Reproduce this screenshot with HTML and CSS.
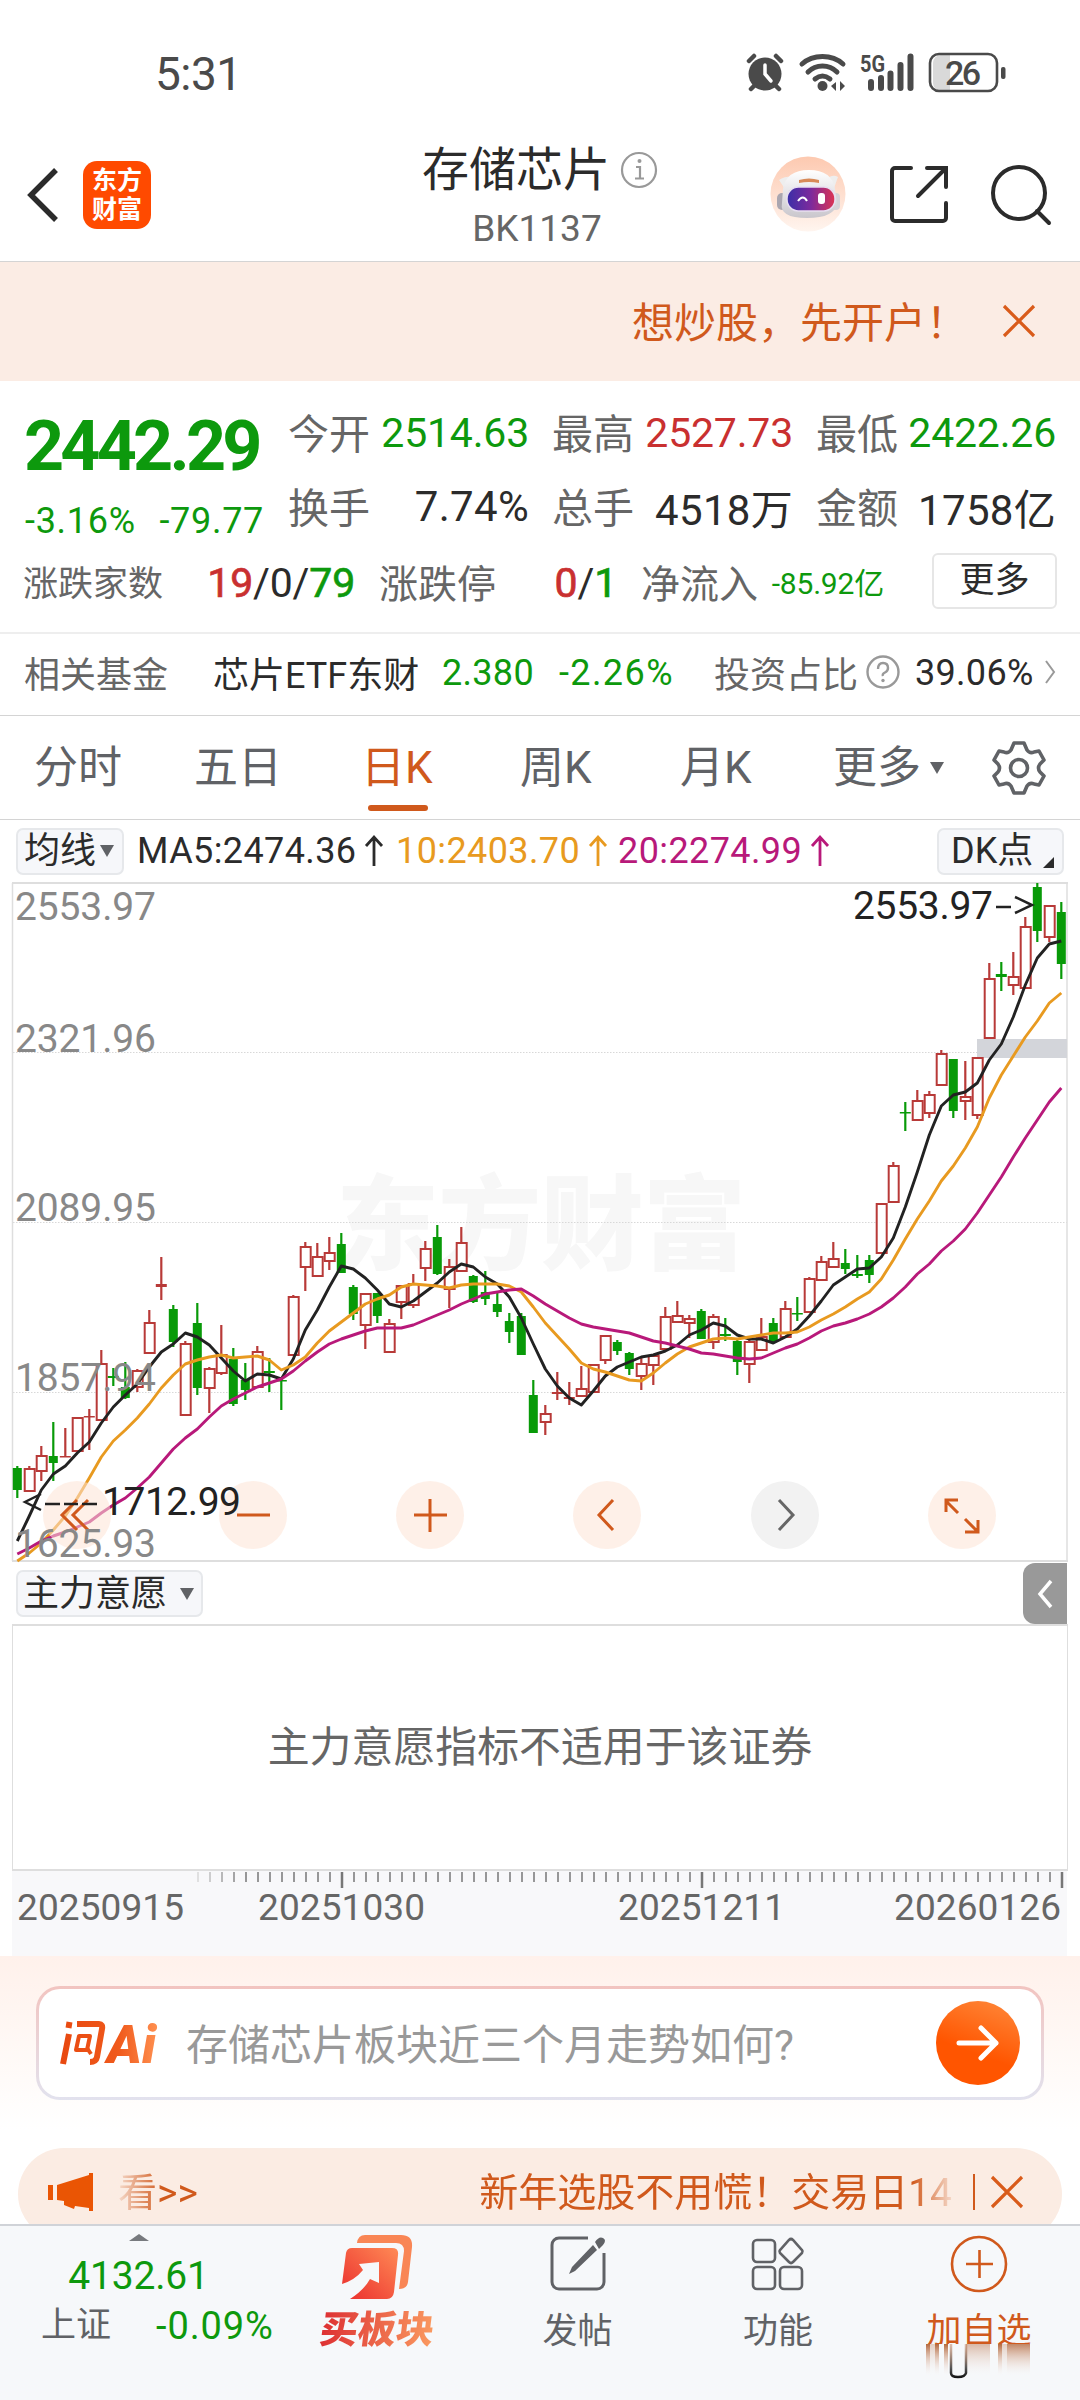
FILE: index.html
```html
<!DOCTYPE html>
<html lang="zh-CN">

<head>
    <meta charset="UTF-8">
    <meta name="viewport" content="width=device-width, initial-scale=1.0">
    <title>存储芯片 BK1137</title>
    <link rel="stylesheet" href="styles.css">
</head>

<body>
    <div class="status-bar">
        <span class="clock">5:31</span>
        <svg class="status-icons" width="264" height="44" viewBox="0 0 264 44">
            <!-- 闹钟 -->
            <g stroke="#4a4a4a" stroke-width="4.5" stroke-linecap="round" fill="none">
                <circle cx="20" cy="22" r="16.5" fill="#4a4a4a" stroke="none" />
                <path d="M4 9l5-5M36 9l-5-5M10 33l-4 4M30 33l4 4" />
                <path d="M20 13v9l6 7" stroke="#fff" stroke-width="3.5" />
            </g>
            <!-- WiFi -->
            <g stroke="#4a4a4a" stroke-width="5" stroke-linecap="round" fill="none">
                <path d="M57 12c11-10 30-10 41 0" />
                <path d="M63 20c8-8 21-8 29 0" />
                <path d="M70 27c5-4 10-4 15 0" />
            </g>
            <circle cx="77.5" cy="34" r="5" fill="#4a4a4a" />
            <path d="M86 34l5-4v9zM93 29v10M95 29l5 5-5 5z" fill="#4a4a4a" />
            <text x="115" y="20" class="net-label" textLength="25" lengthAdjust="spacingAndGlyphs">5G</text>
            <path d="M126 30v6M136 26v10M145.5 21.5v14.5M155.5 13v23M165.5 4.5v31.5" stroke="#4a4a4a"
                stroke-width="6" stroke-linecap="round" />
            <!-- 电池 -->
            <path d="M196 3h9v36h-9a8 8 0 0 1-8-8V11a8 8 0 0 1 8-8z" fill="#d9d9d9" />
            <rect x="185" y="2" width="67" height="37" rx="9" fill="none" stroke="#4a4a4a" stroke-width="2.6" />
            <rect x="256" y="15" width="4.5" height="12" rx="2" fill="#4a4a4a" />
            <text x="200" y="32.5" class="battery-label" textLength="36">26</text>
        </svg>
    </div>

    <header class="header">
        <div class="header-left">
            <svg width="34" height="56" viewBox="0 0 34 56">
                <path d="M31 3L6 28l25 25" fill="none" stroke="#2b2b2b" stroke-width="5.5" />
            </svg>
            <div class="logo"><span>东方</span><span>财富</span></div>
        </div>
        <div class="header-title">
            <h1>存储芯片<svg width="38" height="38" viewBox="0 0 38 38">
                    <circle cx="19" cy="19" r="17" fill="none" stroke="#999" stroke-width="2.2" />
                    <path d="M16 16h4v11M15 27.5h9" fill="none" stroke="#999" stroke-width="2.2" />
                    <circle cx="19.5" cy="10" r="2" fill="#999" />
                </svg></h1>
            <p>BK1137</p>
        </div>
        <div class="header-right">
            <svg width="76" height="76" viewBox="0 0 76 76">
                <defs>
                    <linearGradient id="halo" x1="0" y1="0" x2="0" y2="1">
                        <stop offset="0" stop-color="#fdc9b0" />
                        <stop offset="1" stop-color="#fff5ef" />
                    </linearGradient>
                    <linearGradient id="helmet" x1="0" y1="0" x2="0" y2="1">
                        <stop offset="0" stop-color="#fff" />
                        <stop offset="1" stop-color="#c9c6cc" />
                    </linearGradient>
                    <linearGradient id="visor" x1="0" y1="0" x2="1" y2="0">
                        <stop offset="0" stop-color="#3a2fa8" />
                        <stop offset="0.5" stop-color="#7d2a9c" />
                        <stop offset="1" stop-color="#dd3352" />
                    </linearGradient>
                </defs>
                <circle cx="38" cy="37" r="37.5" fill="url(#halo)" />
                <path d="M9 23q7-4 11-3l-5 12zM68 20q-5-3-10 1l6 10z" fill="#eee" />
                <rect x="7" y="36" width="10" height="17" rx="5" fill="#aaa6b0" />
                <rect x="61" y="36" width="9" height="17" rx="4" fill="#d5d2d8" />
                <path d="M13 32q3-19 26-19t26 19l2 14q-2 15-30 15T12 46z" fill="url(#helmet)" />
                <path d="M29 23q10-3 20 0v3q-10-2-20 0z" fill="#d88a58" />
                <rect x="17" y="30" width="48" height="24" rx="11.5" fill="url(#visor)" stroke="#e7def1" stroke-width="1.5" />
                <path d="M28 44q5-7 9 0" fill="none" stroke="#fff" stroke-width="2" />
                <rect x="48" y="36" width="7" height="11" rx="3" fill="#fff" />
            </svg>
            <svg width="60" height="60" viewBox="0 0 60 60">
                <g fill="none" stroke="#2b2b2b" stroke-width="4" stroke-linecap="round">
                    <path d="M22 3H6a3 3 0 0 0-3 3v47a3 3 0 0 0 3 3h48a3 3 0 0 0 3-3V38" />
                    <path d="M38 3h19v19M56 4L29 31" />
                </g>
            </svg>
            <svg width="60" height="60" viewBox="0 0 60 60">
                <g fill="none" stroke="#2b2b2b" stroke-width="4" stroke-linecap="round">
                    <circle cx="28" cy="28" r="26" />
                    <path d="M46 46l12 12" />
                </g>
            </svg>
        </div>
    </header>

    <div class="promo">
        <span>想炒股，先开户！</span>
        <svg width="34" height="34" viewBox="0 0 34 34">
            <path d="M2 2l30 30M32 2L2 32" stroke="#d95b1a" stroke-width="3.2" />
        </svg>
    </div>

    <section class="quote">
        <div class="quote-grid">
            <div class="price down">2442.29</div>
            <div class="cell"><label>今开</label><b class="down">2514.63</b></div>
            <div class="cell"><label>最高</label><b class="up">2527.73</b></div>
            <div class="cell"><label>最低</label><b class="down">2422.26</b></div>
            <div class="change down"><span>-3.16%</span><span>-79.77</span></div>
            <div class="cell wide"><label>换手</label><b>7.74%</b></div>
            <div class="cell wide"><label>总手</label><b>4518万</b></div>
            <div class="cell wide"><label>金额</label><b>1758亿</b></div>
        </div>
        <div class="breadth">
            <div class="cell"><label class="small">涨跌家数</label><b><i class="up">19</i>/0/<i class="down">79</i></b></div>
            <div class="cell"><label>涨跌停</label><b><i class="up">0</i>/<i class="down">1</i></b></div>
            <div class="cell inflow"><label>净流入</label><b class="down">-85.92亿</b></div>
            <button class="more">更多</button>
        </div>
    </section>

    <div class="fund">
        <span class="muted">相关基金</span>
        <span>芯片ETF东财</span>
        <span class="down num">2.380</span>
        <span class="down num signed">-2.26%</span>
        <span class="muted">投资占比</span>
        <svg width="34" height="34" viewBox="0 0 34 34">
            <circle cx="17" cy="17" r="15.5" fill="none" stroke="#999" stroke-width="2.4" />
            <path d="M12 14q0-6 5-6t5 5q0 3-3 4.5T17 21" fill="none" stroke="#999" stroke-width="2.4" />
            <circle cx="17" cy="25.5" r="1.7" fill="#999" />
        </svg>
        <span class="num">39.06%</span>
        <svg width="12" height="24" viewBox="0 0 12 24">
            <path d="M2 1l8 11-8 11" fill="none" stroke="#999" stroke-width="2" />
        </svg>
    </div>

    <nav class="tabs">
        <span>分时</span>
        <span>五日</span>
        <span class="active">日K</span>
        <span>周K</span>
        <span>月K</span>
        <span class="tab-more">更多<i class="caret"></i></span>
        <svg width="52" height="54" viewBox="-26 -27 52 54">
            <path d="M-5-25H5L8-18Q11-14 15-16L20-17 25-8 21-4Q18 0 21 4L25 8 20 17 15 16Q11 14 8 18L5 25H-5L-8 18Q-11 14-15 16L-20 17-25 8-21 4Q-18 0-21-4L-25-8-20-17-15-16Q-11-14-8-18z"
                fill="none" stroke="#606266" stroke-width="3.6" stroke-linejoin="round" />
            <circle r="8.5" fill="none" stroke="#606266" stroke-width="3.6" />
        </svg>
    </nav>

    <div class="ma-row">
        <span class="select">均线<i class="caret"></i></span>
        <span class="ma ma5">MA5:2474.36<svg width="20" height="32" viewBox="0 0 20 32"><path d="M10 31V2M2 11l8-9 8 9" /></svg></span>
        <span class="ma ma10">10:2403.70<svg width="20" height="32" viewBox="0 0 20 32"><path d="M10 31V2M2 11l8-9 8 9" /></svg></span>
        <span class="ma ma20">20:2274.99<svg width="20" height="32" viewBox="0 0 20 32"><path d="M10 31V2M2 11l8-9 8 9" /></svg></span>
        <span class="select dk">DK点</span>
    </div>

    <svg id="kline" width="1080" height="681" viewBox="0 882 1080 681"></svg>

    <div class="indicator-bar">
        <span class="select">主力意愿<i class="caret"></i></span>
        <span class="drawer">
            <svg width="18" height="30" viewBox="0 0 18 30">
                <path d="M15 2L4 15l11 13" fill="none" stroke="#fff" stroke-width="3.5" />
            </svg>
        </span>
    </div>
    <div class="indicator-panel">主力意愿指标不适用于该证券</div>

    <div class="axis">
        <svg id="ticks" width="1055" height="17" viewBox="12 0 1055 17"></svg>
        <div class="dates">
            <span>20250915</span><span>20251030</span><span>20251211</span><span>20260126</span>
        </div>
    </div>

    <section class="ask">
        <div class="ask-box">
            <svg class="ask-logo" width="98" height="46" viewBox="0 0 98 46">
                <defs>
                    <linearGradient id="ask" gradientUnits="userSpaceOnUse" x1="0" y1="0" x2="98" y2="0">
                        <stop offset="0" stop-color="#e8480f" />
                        <stop offset="0.6" stop-color="#f05a1c" />
                        <stop offset="1" stop-color="#ff9050" />
                    </linearGradient>
                </defs>
                <g fill="none" stroke="url(#ask)" stroke-width="6" stroke-linejoin="round">
                    <path d="M9 14L3 44M9.5 2L8.5 8" />
                    <path d="M17 4h22q4 0 3 5l-5 28q-1 5-7 5" />
                    <path d="M19 16h11l-3 14H16z" stroke-width="4" />
                    <path d="M27 28l4 6" stroke-width="4" />
                </g>
                <text x="47" y="43" class="ask-latin" textLength="49" lengthAdjust="spacingAndGlyphs" fill="url(#ask)">Ai</text>
            </svg>
            <span>存储芯片板块近三个月走势如何?</span>
            <div class="send">
                <svg width="44" height="38" viewBox="0 0 44 38">
                    <path d="M3 19h37M25 4l15 15-15 15" fill="none" stroke="#fff" stroke-width="5" stroke-linecap="round"
                        stroke-linejoin="round" />
                </svg>
            </div>
        </div>
    </section>

    <div class="notice-wrap">
        <div class="notice">
            <svg width="46" height="40" viewBox="0 0 46 40">
                <path d="M0 13h5v15H0zM9 13l32-10V1h4v38h-4v-3l-14-2-1 3-10-4v-4l-7-1z" fill="#ea5504" />
            </svg>
            <div class="marquee"><span>看&gt;&gt;</span><span>新年选股不用慌！交易日14</span></div>
            <i class="divider"></i>
            <svg width="32" height="34" viewBox="0 0 32 34">
                <path d="M1 2l30 30M31 2L1 32" stroke="#d95b1a" stroke-width="3.2" />
            </svg>
        </div>
    </div>

    <footer class="bottom-nav">
        <div class="index">
            <i class="caret-up"></i>
            <div class="index-value down">4132.61</div>
            <div class="index-row"><span>上证</span><span class="down">-0.09%</span></div>
        </div>
        <div class="item buy">
            <svg width="72" height="65" viewBox="0 0 72 65">
                <defs>
                    <linearGradient id="buy" x1="0" y1="1" x2="1" y2="0">
                        <stop offset="0" stop-color="#ea2d2d" />
                        <stop offset="1" stop-color="#ff8a55" />
                    </linearGradient>
                </defs>
                <path d="M16 8q1-8 8-8h36q12 0 11 12l-4 35q-1 7-9 7l5-38q0-8-8-8z" fill="#f98655" />
                <path d="M5 18q1-5 6-5h40q7 0 6 7l-4 37q-1 7-7 7H9q14-9 20-20l9 4V27l-20 2 4 6Q14 45 1 49z" fill="url(#buy)" />
            </svg>
            <span>买板块</span>
        </div>
        <div class="item">
            <svg width="56" height="56" viewBox="0 0 56 56">
                <path d="M38 2H9a7 7 0 0 0-7 7v37a7 7 0 0 0 7 7h38a7 7 0 0 0 7-7V17" fill="none" stroke="#606266" stroke-width="3" />
                <path d="M43 9l4 5-22 21-6 3 3-7zM45 6q4-6 8-4t0 7l-4 4z" fill="#606266" />
            </svg>
            <span>发帖</span>
        </div>
        <div class="item">
            <svg width="54" height="54" viewBox="0 0 54 54">
                <g fill="none" stroke="#606266" stroke-width="2.6">
                    <rect x="2" y="3" width="22" height="22" rx="4" />
                    <rect x="2" y="30" width="22" height="22" rx="4" />
                    <rect x="29" y="30" width="22" height="22" rx="4" />
                    <path d="M38 3q2-2 4 0l9 10q1 1 0 3l-9 9q-2 2-4 0l-9-9q-1-2 0-3z" />
                </g>
            </svg>
            <span>功能</span>
        </div>
        <div class="item add">
            <svg width="58" height="58" viewBox="0 0 58 58">
                <circle cx="29" cy="29" r="27" fill="none" stroke="#d0591c" stroke-width="2.6" />
                <path d="M16 29h27M29.5 15v28" stroke="#d0591c" stroke-width="2.6" />
            </svg>
            <span>加自选</span>
            <svg class="smear" width="110" height="36" viewBox="925 2342 110 36">
                <defs>
                    <linearGradient id="smear" x1="0" y1="0" x2="0" y2="1">
                        <stop offset="0" stop-color="#b4693f" />
                        <stop offset="1" stop-color="#f5e6de" stop-opacity="0" />
                    </linearGradient>
                    <linearGradient id="hook" gradientUnits="userSpaceOnUse" x1="0" y1="2343" x2="0" y2="2377">
                        <stop offset="0" stop-color="#b4693f" stop-opacity="0.4" />
                        <stop offset="0.7" stop-color="#555" />
                        <stop offset="1" stop-color="#111" />
                    </linearGradient>
                </defs>
                <rect x="925" y="2343" width="110" height="35" fill="#f6f8fa" />
                <g fill="url(#smear)">
                    <rect x="927" y="2343" width="4" height="31" />
                    <rect x="931" y="2343" width="5" height="31" opacity="0.3" />
                    <rect x="936" y="2343" width="4" height="31" />
                    <rect x="945" y="2343" width="4" height="31" />
                    <rect x="966" y="2343" width="25" height="31" opacity="0.45" />
                    <rect x="999" y="2343" width="4" height="31" />
                    <rect x="1003" y="2343" width="5" height="31" opacity="0.3" />
                    <rect x="1008" y="2343" width="23" height="31" opacity="0.8" />
                </g>
                <path d="M952 2343v29q0 4 7 4t8-4v-29" fill="#f6f8fa" stroke="url(#hook)" stroke-width="2.5" />
            </svg>
        </div>
    </footer>

    <script src="chart.js"></script>
</body>

</html>
```
FILE: styles.css
```css
* {
    box-sizing: border-box;
}

body {
    margin: 0;
    width: 1080px;
    height: 2400px;
    overflow: hidden;
    display: flex;
    flex-direction: column;
    font-family: Roboto, "Noto Sans CJK SC", sans-serif;
    color: #2b2b2b;
    background-color: #fff;
}

body > * {
    flex-shrink: 0;
}

svg {
    display: block;
    flex-shrink: 0;
    overflow: visible;
}

span,
label,
b {
    white-space: nowrap;
}

i {
    font-style: normal;
}

.up {
    color: #c93030;
}

.down {
    color: #0d990d;
}

.muted {
    color: #666;
}

.caret {
    display: inline-block;
    border: 7px solid transparent;
    border-top: 12px solid #606266;
    border-bottom: 0;
}

/* 状态栏 */
.status-bar {
    height: 130px;
    padding: 17px 71px 0 155px;
    display: flex;
    align-items: center;
    justify-content: space-between;
    color: #4a4a4a;
}

.clock {
    font-size: 46px;
    letter-spacing: -0.5px;
}

.net-label {
    font-size: 23px;
    font-weight: 700;
    fill: #4a4a4a;
}

.battery-label {
    font-size: 34px;
    font-weight: 500;
    fill: #4a4a4a;
}

/* 标题栏 */
.header {
    height: 132px;
    padding: 0 29px 2px 25px;
    display: grid;
    grid-template-columns: 340px 1fr 281px;
    border-bottom: 1px solid #d4d4d4;
}

.header-left {
    display: flex;
    align-items: center;
    gap: 24px;
}

.logo {
    width: 68px;
    height: 68px;
    border-radius: 14px;
    background-color: #ff4a00;
    color: #fff;
    font-size: 25px;
    font-weight: 700;
    line-height: 29px;
    display: flex;
    flex-direction: column;
    align-items: center;
    justify-content: center;
}

.header-title {
    display: flex;
    flex-direction: column;
    align-items: center;
    padding-right: 65px;
}

.header-title h1 {
    margin: 13px -10px 0 0;
    display: flex;
    align-items: center;
    gap: 10px;
    font-size: 47px;
    font-weight: 400;
    line-height: 54px;
    white-space: nowrap;
}

.header-title p {
    margin: 10px 0 0 4px;
    font-size: 37px;
    line-height: 44px;
    color: #666;
}

.header-right {
    display: flex;
    align-items: center;
    justify-content: space-between;
}

.promo {
    height: 119px;
    padding: 0 44px 2px 0;
    display: flex;
    align-items: center;
    justify-content: flex-end;
    gap: 34px;
    background-color: #fbece4;
    color: #d0591c;
    font-size: 42px;
}

.promo span {
    margin-top: -3px;
}

/* 行情 */
.quote {
    height: 251px;
    padding: 0 24px;
}

.quote-grid {
    display: grid;
    grid-template-columns: 241px 240px 240px 239px;
    grid-template-rows: 75px 75px;
    column-gap: 24px;
    padding-top: 14px;
}

.cell {
    display: flex;
    align-items: center;
    justify-content: space-between;
    font-size: 41px;
}

.cell b {
    font-weight: 400;
    letter-spacing: -0.2px;
}

.cell label {
    margin: -4px 0 0 -1px;
    color: #666;
}

.cell.wide {
    padding-bottom: 2px;
}

.cell.wide b {
    font-size: 42px;
    letter-spacing: 0.3px;
}

.price {
    padding-top: 3px;
    font-size: 70px;
    font-weight: 700;
    line-height: 97px;
    letter-spacing: -3.8px;
}

.change {
    display: flex;
    align-items: center;
    justify-content: space-between;
    padding: 27px 1px 0 1px;
    font-size: 36px;
    letter-spacing: 0.7px;
}

.breadth {
    height: 75px;
    display: grid;
    grid-template-columns: 331px 237px 239px 125px;
    column-gap: 25px;
    align-items: center;
}

.breadth label {
    font-size: 39px;
}

.breadth label.small {
    font-size: 35px;
}

.breadth b i {
    -webkit-text-stroke: 0.7px currentColor;
}

.breadth .inflow {
    margin-right: -3px;
}

.breadth .inflow b {
    margin-top: -3px;
    font-size: 30px;
}

.more {
    height: 56px;
    margin: -3px -26px 0 26px;
    padding: 0;
    border: 2px solid #e6e6e6;
    border-radius: 6px;
    background-color: #fff;
    color: #2b2b2b;
    font-family: inherit;
    font-size: 35px;
    line-height: 44px;
}

.fund {
    height: 84px;
    padding: 0 24px 5px;
    display: grid;
    grid-template-columns: 189px 229px 117px 155px 152px 49px 129px 12px;
    align-items: center;
    border-top: 2px solid #eee;
    border-bottom: 1px solid #d4d4d4;
    font-size: 36px;
}

.fund .num {
    margin-top: 1px;
    letter-spacing: 0.3px;
}

.fund .signed {
    letter-spacing: 1.4px;
}

/* 周期 */
.tabs {
    height: 104px;
    padding: 0 34px;
    display: grid;
    grid-template-columns: 160px 167px 159px 160px 153px 160px 52px;
    align-items: center;
    border-bottom: 1px solid #d4d4d4;
    color: #606266;
    font-size: 44px;
}

.tabs > span {
    height: 103px;
    line-height: 104px;
}

.tabs .active {
    color: #d0591c;
}

.tabs .active::after {
    content: "";
    display: block;
    width: 60px;
    height: 6px;
    margin: -15px 0 0 7px;
    border-radius: 3px;
    background-color: #d0591c;
}

.tab-more {
    display: flex;
    align-items: center;
    gap: 9px;
}

.ma-row {
    height: 62px;
    padding: 0 16px;
    display: grid;
    grid-template-columns: 121px 259px 222px 319px 127px;
    align-items: center;
    font-size: 36px;
}

.select {
    height: 47px;
    padding: 0 6px;
    display: flex;
    align-items: center;
    gap: 4px;
    border: 2px solid #e6e8eb;
    border-radius: 7px;
    background-color: #f6f7fa;
    font-size: 36px;
    line-height: 40px;
}

.ma-row .select:first-child {
    width: 108px;
}

.ma {
    display: flex;
    align-items: center;
    gap: 8px;
    letter-spacing: 0.4px;
}

.ma path {
    fill: none;
    stroke: currentColor;
    stroke-width: 2.8;
}

.ma10 {
    color: #e89a20;
}

.ma20 {
    color: #b8197a;
}

.ma-row .dk {
    padding-left: 12px;
}

.dk::after {
    content: "";
    margin: 22px 0 0 6px;
    border-left: 11px solid transparent;
    border-bottom: 11px solid #2b2b2b;
}

/* K线 */
.y-label {
    font-size: 39px;
    fill: #888;
}

.mark {
    font-size: 39px;
    fill: #222;
}

.watermark {
    font-size: 103px;
    font-weight: 900;
    fill: #f7f7f7;
}

.indicator-bar {
    height: 61px;
    padding: 0 13px 0 16px;
    display: flex;
    align-items: center;
    justify-content: space-between;
}

.indicator-bar .select {
    width: 187px;
    padding-left: 5px;
    gap: 13px;
}

.drawer {
    width: 44px;
    height: 61px;
    display: flex;
    align-items: center;
    justify-content: center;
    border-radius: 12px 0 0 12px;
    background-color: #999;
}

.indicator-panel {
    height: 247px;
    margin: 0 12px;
    padding-bottom: 9px;
    display: flex;
    align-items: center;
    justify-content: center;
    border: 1px solid #dedede;
    border-width: 2px 1px;
    color: #666;
    font-size: 41.9px;
}

.axis {
    height: 85px;
    margin: 0 13px 0 12px;
    background-color: #f8f8fa;
}

.dates {
    display: grid;
    grid-template-columns: 241px 360px 276px 1fr;
    padding-left: 5px;
    color: #666;
    font-size: 37px;
    line-height: 40px;
    letter-spacing: 0.1px;
}

/* 问AI */
.ask {
    height: 174px;
    padding: 30px 36px 0;
    background: linear-gradient(#fff1eb, #fff);
}

.ask-box {
    height: 114px;
    padding: 0 21px;
    display: flex;
    align-items: center;
    border: 3px solid transparent;
    border-radius: 24px;
    background: linear-gradient(#fff, #fff) padding-box, linear-gradient(#f2c4c0, #e2e2ee) border-box;
    color: #999;
    font-size: 42px;
}

.ask-box > span {
    margin-top: -4px;
}

.ask-logo {
    margin-right: 28px;
}

.ask-latin {
    font-size: 54px;
    font-weight: 900;
    font-style: italic;
}

.send {
    width: 84px;
    height: 84px;
    margin-left: auto;
    display: flex;
    align-items: center;
    justify-content: center;
    border-radius: 50%;
    background: linear-gradient(200deg, #ff8a3c, #ff5500 60%);
}

.notice-wrap {
    height: 94px;
    padding: 18px 18px 0;
    overflow: hidden;
}

.notice {
    height: 92px;
    padding: 0 39px 4px 30px;
    display: flex;
    align-items: center;
    border-radius: 46px;
    background-color: #fbece3;
    color: #d0591c;
    font-size: 39px;
}

.marquee {
    width: 841px;
    margin: -7px 0 0 18px;
    padding-left: 6px;
    display: flex;
    justify-content: space-between;
    -webkit-mask-image: linear-gradient(90deg, transparent, #000 50px, #000 800px, transparent 846px);
    mask-image: linear-gradient(90deg, transparent, #000 50px, #000 800px, transparent 846px);
}

.divider {
    width: 2px;
    height: 36px;
    margin: 0 16px 0 21px;
    background-color: #d0591c;
}

/* 底部导航 */
.bottom-nav {
    height: 176px;
    display: grid;
    grid-template-columns: 277px 200px 201px 200px 202px;
    border-top: 2px solid #d0d3d8;
    background-color: #f6f8fa;
    color: #606266;
    font-size: 35px;
}

.index {
    display: flex;
    flex-direction: column;
    align-items: center;
    padding-top: 8px;
}

.caret-up {
    border: 10px solid transparent;
    border-top: 0;
    border-bottom: 7px solid #777a7e;
}

.index-value {
    margin: 11px 0 0;
    font-size: 39px;
    line-height: 49px;
    letter-spacing: -0.2px;
}

.index-row {
    width: 100%;
    padding-left: 41px;
    display: flex;
    align-items: center;
    gap: 45px;
    line-height: 50px;
}

.index-row .down {
    font-size: 38px;
    letter-spacing: 0.9px;
}

.item {
    display: flex;
    flex-direction: column;
    align-items: center;
    padding-top: 9px;
}

.item > svg:first-child {
    height: 58px;
}

.item > span {
    margin-top: 15px;
    line-height: 48px;
}

.buy > svg:first-child {
    height: 65px;
}

.buy > span {
    margin-top: 6px;
    font-size: 38px;
    font-weight: 900;
    transform: skewX(-7deg);
    background: linear-gradient(90deg, #dd2f32, #fa9a60);
    -webkit-background-clip: text;
    background-clip: text;
    color: transparent;
}

.add {
    color: #d0591c;
}

/* 盖在“加自选”文字下沿 */
.smear {
    margin-top: -13px;
    position: relative;
}
```
FILE: chart.js
```js
// [方向, 最高, 实体上沿, 实体下沿, 最低]
const candles = [
    ['g', 1466, 1468, 1490, 1498], ['r', 1466, 1469, 1491, 1491], ['r', 1446, 1456, 1471, 1481], ['g', 1422, 1456, 1463, 1481],
    ['r', 1428, 1456, 1457, 1457], ['r', 1417, 1418, 1451, 1452], ['r', 1409, 1416, 1417, 1450], ['r', 1350, 1364, 1420, 1420],
    ['g', 1368, 1376, 1378, 1386], ['g', 1362, 1387, 1398, 1399], ['r', 1369, 1371, 1387, 1392], ['r', 1310, 1323, 1353, 1353],
    ['r', 1257, 1284, 1287, 1300], ['g', 1305, 1309, 1342, 1347], ['r', 1341, 1344, 1415, 1415], ['g', 1303, 1323, 1388, 1395],
    ['r', 1367, 1369, 1388, 1413], ['r', 1325, 1355, 1373, 1375], ['g', 1348, 1359, 1404, 1406], ['g', 1363, 1380, 1390, 1400],
    ['r', 1346, 1352, 1387, 1388], ['g', 1358, 1371, 1373, 1392], ['g', 1379, 1380, 1381, 1410], ['r', 1295, 1297, 1355, 1355],
    ['r', 1242, 1247, 1267, 1291], ['r', 1243, 1257, 1276, 1276], ['r', 1237, 1253, 1261, 1270], ['g', 1233, 1244, 1273, 1273],
    ['g', 1285, 1287, 1314, 1320], ['r', 1293, 1294, 1325, 1349], ['g', 1293, 1293, 1316, 1323], ['r', 1319, 1324, 1352, 1352],
    ['r', 1286, 1286, 1302, 1319], ['r', 1274, 1284, 1305, 1308], ['r', 1241, 1249, 1268, 1281], ['g', 1225, 1237, 1274, 1275],
    ['r', 1259, 1267, 1289, 1308], ['r', 1227, 1243, 1271, 1271], ['g', 1275, 1276, 1302, 1303], ['g', 1271, 1292, 1299, 1305],
    ['g', 1293, 1304, 1312, 1317], ['g', 1313, 1321, 1332, 1343], ['g', 1313, 1316, 1355, 1355], ['g', 1380, 1395, 1433, 1433],
    ['r', 1405, 1414, 1422, 1435], ['r', 1372, 1392, 1394, 1400], ['r', 1382, 1397, 1399, 1405], ['r', 1366, 1389, 1396, 1396],
    ['r', 1365, 1365, 1392, 1393], ['r', 1335, 1336, 1360, 1364], ['g', 1340, 1342, 1351, 1355], ['g', 1352, 1353, 1369, 1375],
    ['r', 1358, 1364, 1376, 1390], ['r', 1355, 1356, 1365, 1385], ['r', 1307, 1317, 1349, 1349], ['r', 1301, 1316, 1322, 1322],
    ['r', 1315, 1319, 1323, 1338], ['g', 1309, 1311, 1339, 1339], ['r', 1314, 1317, 1342, 1349], ['g', 1318, 1334, 1336, 1341],
    ['g', 1340, 1341, 1362, 1375], ['r', 1339, 1342, 1364, 1383], ['r', 1318, 1337, 1350, 1350], ['g', 1318, 1323, 1342, 1343],
    ['r', 1301, 1309, 1337, 1338], ['g', 1297, 1313, 1314, 1321], ['r', 1277, 1279, 1312, 1313], ['r', 1256, 1262, 1280, 1280],
    ['r', 1242, 1259, 1267, 1267], ['g', 1249, 1263, 1269, 1274], ['g', 1255, 1274, 1276, 1278], ['g', 1255, 1260, 1275, 1283],
    ['r', 1203, 1204, 1253, 1254], ['r', 1162, 1166, 1202, 1202], ['g', 1102, 1112, 1113, 1131], ['r', 1090, 1101, 1120, 1120],
    ['r', 1091, 1095, 1113, 1118], ['r', 1050, 1054, 1085, 1086], ['g', 1059, 1059, 1111, 1118], ['r', 1061, 1097, 1101, 1120],
    ['r', 1057, 1058, 1115, 1119], ['r', 963, 979, 1038, 1039], ['g', 962, 974, 977, 991], ['r', 952, 977, 985, 995],
    ['r', 917, 927, 988, 988], ['g', 883, 887, 931, 942], ['r', 905, 906, 937, 942], ['g', 902, 912, 964, 979]
];

const ma5 = [1541, 1516, 1490, 1474, 1466, 1453, 1442, 1423, 1407, 1395, 1384, 1367, 1352, 1344, 1333, 1337, 1345, 1358, 1371, 1381,
    1374, 1375, 1379, 1359, 1330, 1310, 1287, 1266, 1269, 1278, 1290, 1304, 1307, 1301, 1292, 1283, 1272, 1264, 1267, 1277,
    1284, 1297, 1318, 1344, 1369, 1386, 1398, 1405, 1391, 1376, 1367, 1362, 1357, 1355, 1351, 1345, 1335, 1330, 1323, 1326,
    1335, 1339, 1339, 1343, 1337, 1329, 1316, 1301, 1285, 1277, 1269, 1268, 1257, 1238, 1207, 1172, 1135, 1106, 1095, 1092,
    1083, 1060, 1044, 1017, 985, 958, 944, 941];
const ma10 = [1561, 1553, 1543, 1530, 1516, 1498, 1478, 1457, 1441, 1430, 1418, 1404, 1388, 1375, 1364, 1360, 1357, 1355, 1358, 1357,
    1356, 1360, 1370, 1365, 1357, 1343, 1331, 1322, 1313, 1304, 1299, 1295, 1287, 1284, 1285, 1286, 1288, 1285, 1284, 1284,
    1284, 1286, 1292, 1307, 1323, 1336, 1349, 1363, 1369, 1372, 1376, 1380, 1381, 1373, 1363, 1354, 1347, 1343, 1339, 1338,
    1339, 1337, 1335, 1333, 1333, 1332, 1327, 1320, 1314, 1307, 1299, 1292, 1279, 1260, 1239, 1219, 1201, 1181, 1166, 1148,
    1127, 1098, 1075, 1056, 1037, 1021, 1003, 993];
const ma20 = [1554, 1548, 1541, 1536, 1532, 1527, 1522, 1513, 1505, 1498, 1488, 1477, 1463, 1449, 1438, 1429, 1417, 1406, 1399, 1393,
    1387, 1383, 1379, 1371, 1361, 1352, 1344, 1339, 1335, 1331, 1328, 1328, 1328, 1325, 1320, 1315, 1310, 1304, 1299, 1294,
    1292, 1290, 1289, 1296, 1304, 1311, 1318, 1324, 1327, 1329, 1331, 1333, 1337, 1341, 1343, 1346, 1349, 1353, 1354, 1356,
    1358, 1359, 1358, 1353, 1348, 1344, 1338, 1331, 1326, 1323, 1319, 1314, 1307, 1298, 1287, 1274, 1264, 1251, 1241, 1229,
    1213, 1195, 1177, 1157, 1138, 1120, 1102, 1088];

const x = i => 17.3 + i * 12;
const RED = '#b83a38';
const GREEN = '#089a08';

let svg = '';

// 边框、网格、水印
svg += '<text class="watermark" x="336" y="1262" textLength="410">东方财富</text>';
[1052.5, 1222.5, 1392.5].forEach(y => {
    svg += `<path d="M13 ${y}H1067" stroke="#d8d8d8" stroke-dasharray="1.5 1.5"/>`;
});
svg += '<path d="M12.5 883V1561M1067 883V1561" stroke="#dedede" stroke-width="1.5"/>';
svg += '<path d="M12 883H1068M12 1561H1068" stroke="#dedede" stroke-width="2"/>';
svg += '<rect x="977" y="1039" width="90" height="19" fill="#d3d5da"/>';

candles.forEach(([dir, high, top, bottom, low], i) => {
    const cx = x(i);
    const color = dir === 'r' ? RED : GREEN;
    const h = bottom - top;
    if (dir === 'g' || h < 4) {
        svg += `<path d="M${cx} ${high}V${low}" stroke="${color}" stroke-width="2.2"/>`;
        const w = dir === 'g' && h > 3 ? 9 : 11;
        svg += `<rect x="${cx - w / 2}" y="${top}" width="${w}" height="${Math.max(h, 1.5)}" fill="${color}"/>`;
    } else {
        svg += `<path d="M${cx} ${high}V${top}M${cx} ${bottom}V${low}" stroke="${color}" stroke-width="2.2"/>`;
        svg += `<rect x="${cx - 4.6}" y="${top}" width="10" height="${h}" fill="#fff" stroke="${color}" stroke-width="2"/>`;
    }
});

[[ma5, '#222'], [ma10, '#e89a20'], [ma20, '#b8197a']].forEach(([values, color]) => {
    const points = values.map((y, i) => `${x(i)},${y}`).join(' ');
    svg += `<polyline points="${points}" fill="none" stroke="${color}" stroke-width="2.9" stroke-linejoin="round"/>`;
});

// 操作按钮
const buttons = [
    [77, 'M0-15L-15 0 0 15M11-15L-4 0 11 15'],
    [253, 'M-16 0H17'],
    [430, 'M-16 0H17M0-16V17'],
    [607, 'M6-15L-8 0 6 15'],
    [785, 'M-6-15L8 0-6 15'],
    [962, 'M-16-3V-15H-4M-16-14L-4-2M16 5V17H3M15 16L3 4']
];
buttons.forEach(([cx, d], i) => {
    const grey = i === 4;
    svg += `<g transform="translate(${cx} 1515)"><circle r="34" fill="${grey ? '#f2f2f2' : '#fee3d5'}" opacity="${grey ? 1 : 0.55}"/>`;
    svg += `<path d="${d}" fill="none" stroke="${grey ? '#666' : '#d0591c'}" stroke-width="3"/></g>`;
});

[['2553.97', 920], ['2321.96', 1052], ['2089.95', 1221], ['1857.94', 1391], ['1625.93', 1557]].forEach(([t, y]) => {
    svg += `<text class="y-label" x="15" y="${y}" textLength="141">${t}</text>`;
});
svg += '<text class="mark" x="102" y="1515" textLength="139">1712.99</text>';
svg += '<path d="M41 1494L25 1502l16 8M45 1504h15M64 1504h14M82 1504h15" fill="none" stroke="#222" stroke-width="2.5"/>';
svg += '<text class="mark" x="853" y="919" textLength="140">2553.97</text>';
svg += '<path d="M996 907h15M1015 897l17 8-17 8" fill="none" stroke="#222" stroke-width="2.5"/>';

document.getElementById('kline').innerHTML = svg;

// 时间轴刻度
let ticks = '';
for (let i = 0; i <= 72; i++) {
    const major = i % 30 === 12;
    const tx = 198 + i * 12;
    ticks += `<path d="M${tx} 1V${major ? 17 : 11}" stroke="#777" stroke-width="${major ? 2.5 : 1.5}" opacity="${Math.min(1, 0.25 + i * 0.2)}"/>`;
}
document.getElementById('ticks').innerHTML = ticks;
```
